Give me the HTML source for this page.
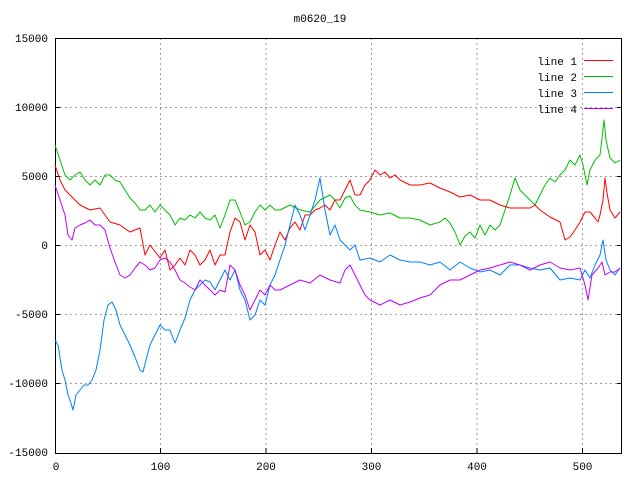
<!DOCTYPE html>
<html><head><meta charset="utf-8"><style>
html,body{margin:0;padding:0;background:#fff;width:640px;height:480px;overflow:hidden}
svg{display:block}
text{font-family:"Liberation Mono","DejaVu Sans Mono",monospace;font-size:11px;fill:#000}
</style></head><body>
<svg width="640" height="480" viewBox="0 0 640 480" xmlns="http://www.w3.org/2000/svg">
<rect width="640" height="480" fill="#fff"/>
<g stroke="#a0a0a0" stroke-width="1" stroke-dasharray="2,3" fill="none">
<line x1="55" y1="107.5" x2="622" y2="107.5"/>
<line x1="55" y1="176.5" x2="622" y2="176.5"/>
<line x1="55" y1="245.5" x2="622" y2="245.5"/>
<line x1="55" y1="314.5" x2="622" y2="314.5"/>
<line x1="55" y1="383.5" x2="622" y2="383.5"/>
<line x1="160.5" y1="38" x2="160.5" y2="453"/>
<line x1="266" y1="38" x2="266" y2="453"/>
<line x1="371.5" y1="38" x2="371.5" y2="453"/>
<line x1="477" y1="38" x2="477" y2="453"/>
<line x1="582.5" y1="38" x2="582.5" y2="453"/>
</g>
<rect x="55.5" y="38.5" width="566" height="415" fill="none" stroke="#000" stroke-width="1"/>
<g stroke="#000" stroke-width="1">
<line x1="55" y1="107.5" x2="60" y2="107.5"/><line x1="617" y1="107.5" x2="622" y2="107.5"/>
<line x1="55" y1="176.5" x2="60" y2="176.5"/><line x1="617" y1="176.5" x2="622" y2="176.5"/>
<line x1="55" y1="245.5" x2="60" y2="245.5"/><line x1="617" y1="245.5" x2="622" y2="245.5"/>
<line x1="55" y1="314.5" x2="60" y2="314.5"/><line x1="617" y1="314.5" x2="622" y2="314.5"/>
<line x1="55" y1="383.5" x2="60" y2="383.5"/><line x1="617" y1="383.5" x2="622" y2="383.5"/>
<line x1="160.5" y1="453" x2="160.5" y2="448"/><line x1="266" y1="453" x2="266" y2="448"/>
<line x1="371.5" y1="453" x2="371.5" y2="448"/><line x1="477" y1="453" x2="477" y2="448"/>
<line x1="582.5" y1="453" x2="582.5" y2="448"/>
</g>
<text x="320" y="22" text-anchor="middle">m0620_19</text>
<g text-anchor="end">
<text x="48" y="42">15000</text><text x="48" y="111">10000</text><text x="48" y="180">5000</text>
<text x="48" y="249">0</text><text x="48" y="318">-5000</text><text x="48" y="387">-10000</text>
<text x="48" y="456">-15000</text>
</g>
<g text-anchor="middle">
<text x="56" y="470">0</text><text x="160.5" y="470">100</text><text x="266" y="470">200</text>
<text x="371.5" y="470">300</text><text x="477" y="470">400</text><text x="582.5" y="470">500</text>
</g>
<g text-anchor="end">
<text x="577" y="65">line 1</text><text x="577" y="81">line 2</text>
<text x="577" y="97">line 3</text><text x="577" y="113">line 4</text>
</g>
<line x1="584" y1="60.5" x2="613" y2="60.5" stroke="#ff0000"/>
<line x1="584" y1="76.5" x2="613" y2="76.5" stroke="#00c000"/>
<line x1="584" y1="92.5" x2="613" y2="92.5" stroke="#0080ff"/>
<line x1="584" y1="108.5" x2="613" y2="108.5" stroke="#c000ff"/>
<g fill="none" stroke-width="1" stroke-linejoin="round">
<polyline stroke="#00c000" points="55,145 60,160 65,175 70,180 75,175 80,172 85,180 90,185 95,180 100,185 105,175 110,175 115,180 120,182 125,190 130,198 135,203 140,210 145,210 150,205 155,212 160,205 165,210 170,215 175,225 180,218 185,220 190,215 195,218 200,212 205,218 210,220 215,215 220,228 225,215 230,200 235,200 240,212 245,225 250,222 255,212 260,205 265,210 270,205 275,210 280,210 290,205 300,210 310,212 320,200 330,195 335,200 340,208 345,198 350,196 355,205 360,210 370,212 380,215 390,213 400,218 410,218 420,220 430,225 440,222 445,218 450,223 455,232 460,245 465,236 470,232 475,238 480,225 485,235 490,225 495,230 500,225 505,210 510,195 515,178 520,190 525,195 530,200 535,205 540,195 545,185 550,178 555,182 560,175 565,170 570,160 575,165 580,155 583,165 587,185 590,170 595,160 600,155 602,138 604,120 606,140 610,158 615,163 620,160"/>
<polyline stroke="#ff0000" points="55,165 60,180 65,190 70,195 80,205 90,210 100,208 110,222 120,225 130,232 140,228 145,255 150,245 160,258 165,250 170,270 175,265 180,258 185,265 190,250 195,255 200,265 205,260 210,250 215,265 220,255 225,255 230,232 235,218 240,222 245,240 250,225 255,232 260,255 265,250 270,260 275,245 280,232 285,240 290,228 295,222 300,230 305,215 310,215 315,210 320,208 325,205 330,210 335,200 340,200 345,190 350,180 355,195 360,195 365,185 370,180 375,170 380,175 385,172 390,178 395,175 400,180 410,185 420,185 430,183 440,188 450,192 460,197 470,195 480,200 490,200 500,205 510,208 520,208 530,208 535,205 540,210 550,217 560,222 565,240 570,237 575,230 580,222 585,212 590,212 595,218 598,222 600,215 603,200 605,178 607,193 610,210 615,218 620,212"/>
<polyline stroke="#0080ff" points="55,340 58,345 62,370 65,380 68,395 70,400 73,410 76,395 80,390 84,385 88,385 92,380 96,370 100,350 104,320 108,305 112,302 116,310 120,325 125,335 130,345 135,357 140,370 143,372 146,360 150,345 155,335 160,325 165,330 170,330 175,343 180,330 185,318 190,300 195,290 200,285 205,280 210,282 215,290 220,280 225,270 230,280 235,270 240,290 245,300 250,320 255,315 260,300 265,305 270,285 275,275 280,260 285,245 290,225 295,205 300,215 305,230 310,215 315,200 320,178 325,210 330,235 335,225 340,240 345,245 350,250 355,245 360,260 370,258 380,262 390,255 400,260 410,262 420,262 430,265 440,262 450,270 460,262 470,268 480,272 490,270 500,275 510,265 520,265 530,268 540,270 550,268 560,280 570,278 580,280 585,270 590,278 595,265 600,255 603,240 606,260 610,270 615,275 620,268"/>
<polyline stroke="#c000ff" points="55,185 60,200 65,215 68,235 72,240 75,228 80,225 85,223 90,220 95,225 100,225 105,230 110,248 115,262 120,275 125,278 130,275 135,268 140,262 145,265 150,270 155,268 160,260 165,258 170,262 175,270 180,280 185,283 190,287 195,290 200,280 205,285 210,290 215,295 220,290 225,292 230,265 235,270 240,285 245,295 250,310 255,300 260,290 265,295 270,285 275,290 280,290 290,285 300,280 310,283 320,275 330,280 340,283 345,270 350,265 355,275 360,285 365,295 370,300 380,305 390,300 400,305 410,302 420,298 430,295 440,285 450,280 460,280 470,275 480,270 490,268 500,265 510,262 520,265 530,270 540,265 550,262 560,268 570,270 580,268 585,285 588,300 592,275 598,268 602,262 605,275 610,272 615,272 620,268"/>
</g>
</svg>
</body></html>
